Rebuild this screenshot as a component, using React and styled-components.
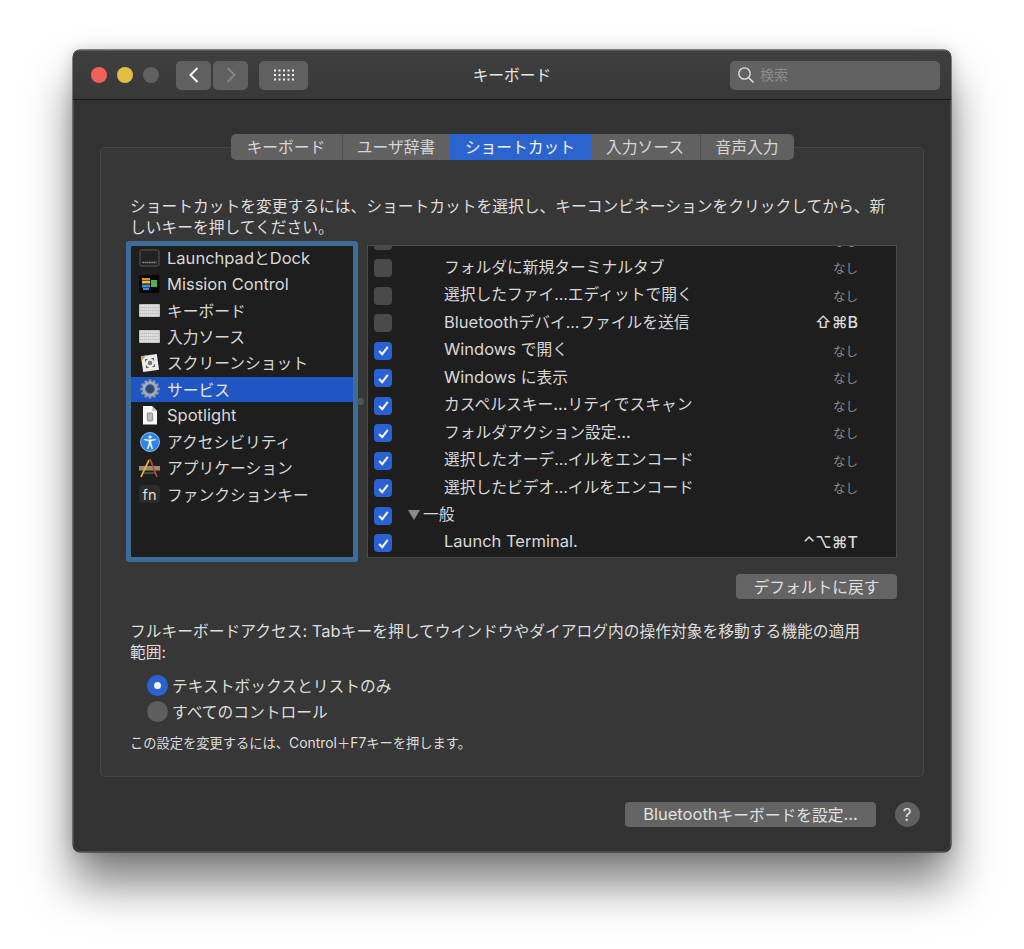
import React from "react";
import styled, { createGlobalStyle } from "styled-components";

const SANS = `Inter, "Noto Sans CJK JP", "DejaVu Sans", sans-serif`;

const TABS = ["キーボード", "ユーザ辞書", "ショートカット", "入力ソース", "音声入力"];
const TAB_WIDTHS = ["111px", "108px", "141px", "109px", "94px"];

const DockIcon = () => (
  <svg width="21" height="18" viewBox="0 0 21 18">
    <rect x="1" y="1" width="19" height="16" rx="1.5" fill="#222" stroke="#585858" />
    <line x1="3.5" x2="17.5" y1="13.5" y2="13.5" stroke="#8e8e8e" strokeWidth="1.6" strokeDasharray="1.6 .6" />
  </svg>
);

const MissionIcon = () => (
  <svg width="21" height="18" viewBox="0 0 21 18">
    <rect x="0.5" y="0" width="20" height="18" rx="1.5" fill="#050505" />
    <rect x="3" y="3" width="8" height="2.5" fill="#e8863a" />
    <rect x="3" y="6" width="8" height="2.5" fill="#e8c23a" />
    <rect x="3" y="9.5" width="8" height="3" fill="#3f8fdc" />
    <rect x="4" y="13" width="6" height="2" fill="#3f8fdc" />
    <rect x="12" y="5" width="6" height="7" fill="#4cb04c" />
  </svg>
);

const KeyboardIcon = () => (
  <svg width="21" height="13" viewBox="0 0 21 13">
    <rect x="0" y="0" width="21" height="13" rx="1" fill="#c4c4c4" />
    {[2, 5, 8, 11].map((y) => (
      <line key={y} x1="1.5" x2="19.5" y1={y} y2={y} stroke="#ececec" strokeWidth="1.6" strokeDasharray="1.6 .5" />
    ))}
  </svg>
);

const ScreenshotIcon = () => (
  <svg width="20" height="20" viewBox="0 0 20 20">
    <g transform="rotate(-8 10 10)">
      <rect x="2" y="2" width="16" height="16" fill="#ececec" />
      <path d="M2 2h5l-5 5z" fill="#d9a05a" />
      <path d="M6 8V6h2M12 6h2v2M14 12v2h-2M8 14H6v-2" fill="none" stroke="#555" strokeWidth="1.1" />
      <circle cx="10" cy="10" r="2.3" fill="#777" />
    </g>
  </svg>
);

const GearIcon = () => (
  <svg width="20" height="20" viewBox="0 0 20 20">
    {[0, 30, 60, 90, 120, 150, 180, 210, 240, 270, 300, 330].map((a) => (
      <rect key={a} x="8.7" y="0.3" width="2.6" height="4" fill="#8f97a3" transform={`rotate(${a} 10 10)`} />
    ))}
    <circle cx="10" cy="10" r="6.2" fill="none" stroke="#a3aab5" strokeWidth="3" />
    <circle cx="10" cy="10" r="3.6" fill="#3b4656" />
  </svg>
);

const SpotlightIcon = () => (
  <svg width="16" height="20" viewBox="0 0 16 20">
    <path d="M1 1h9l5 5v13.5H1z" fill="#fafafa" />
    <path d="M10 1v5h5z" fill="#c9c9c9" />
    <rect x="5.3" y="8" width="5.4" height="8" rx="1" fill="#bbb" stroke="#777" strokeWidth="0.8" />
  </svg>
);

const AccessIcon = () => (
  <svg width="20" height="20" viewBox="0 0 20 20">
    <circle cx="10" cy="10" r="9.5" fill="#2f86ea" stroke="#b8d6f5" strokeWidth="0.8" />
    <circle cx="10" cy="5" r="1.6" fill="#fff" />
    <path d="M4.8 7.6c3.4.9 7 .9 10.4 0" fill="none" stroke="#fff" strokeWidth="1.4" strokeLinecap="round" />
    <path d="M10 8.4v3.8" stroke="#fff" strokeWidth="2.6" />
    <path d="M9.4 12 7.8 16.4M10.6 12l1.6 4.4" fill="none" stroke="#fff" strokeWidth="1.4" strokeLinecap="round" />
  </svg>
);

const AppsIcon = () => (
  <svg width="21" height="20" viewBox="0 0 21 20">
    <rect x="0" y="8" width="21" height="4.5" fill="#a58a68" />
    <path d="M2 19 10 2" stroke="#e8c13a" strokeWidth="1.7" />
    <path d="M18 19 11 1" stroke="#b0503a" strokeWidth="1.7" />
    <path d="M5 15h11" stroke="#8a7355" strokeWidth="1" />
  </svg>
);

const FnIcon = () => <FnKey>fn</FnKey>;

const CATEGORIES = [
  { label: "LaunchpadとDock", Icon: DockIcon },
  { label: "Mission Control", Icon: MissionIcon },
  { label: "キーボード", Icon: KeyboardIcon },
  { label: "入力ソース", Icon: KeyboardIcon },
  { label: "スクリーンショット", Icon: ScreenshotIcon },
  { label: "サービス", Icon: GearIcon, selected: true },
  { label: "Spotlight", Icon: SpotlightIcon },
  { label: "アクセシビリティ", Icon: AccessIcon },
  { label: "アプリケーション", Icon: AppsIcon },
  { label: "ファンクションキー", Icon: FnIcon },
];

const SHORTCUTS = [
  { label: "", key: "なし" },
  { label: "フォルダに新規ターミナルタブ", key: "なし" },
  { label: "選択したファイ…エディットで開く", key: "なし" },
  { label: "Bluetoothデバイ…ファイルを送信", key: "⇧⌘B", bound: true },
  { label: "Windows で開く", key: "なし", on: true },
  { label: "Windows に表示", key: "なし", on: true },
  { label: "カスペルスキー...リティでスキャン", key: "なし", on: true },
  { label: "フォルダアクション設定...", key: "なし", on: true },
  { label: "選択したオーデ…イルをエンコード", key: "なし", on: true },
  { label: "選択したビデオ…イルをエンコード", key: "なし", on: true },
  { label: "一般", group: true, on: true },
  { label: "Launch Terminal.", key: "⌃⌥⌘T", bound: true, on: true },
];

// latin runs read a bit larger than the kana next to them
const Mixed = ({ text }) =>
  text.split(/([A-Za-z0-9 :.+]+)/).map((part, i) => (i % 2 ? <Latin key={i}>{part}</Latin> : part));

const App = () => {
  return (
    <>
      <GlobalStyle />
      <Page>
        <Window>
          <TitleBar>
            <TitleLeft>
              <Lights>
                <Light $color="#f1605a" />
                <Light $color="#e3bf41" />
                <Light $color="#616161" />
              </Lights>
              <NavGroup>
                <ToolButton $width="35px">
                  <svg width="14" height="18" viewBox="0 0 14 18">
                    <path d="M10.5 2 3.5 9l7 7" fill="none" stroke="#f2f2f2" strokeWidth="2" />
                  </svg>
                </ToolButton>
                <ToolButton $width="35px">
                  <svg width="14" height="18" viewBox="0 0 14 18">
                    <path d="M3.5 2l7 7-7 7" fill="none" stroke="#858585" strokeWidth="2" />
                  </svg>
                </ToolButton>
              </NavGroup>
              <ToolButton $width="49px">
                <svg width="20" height="14" viewBox="0 0 20 14">
                  {[2.5, 7, 11.5].flatMap((y) =>
                    [1, 5.5, 10, 14.5, 19].map((x) => (
                      <rect key={`${x}-${y}`} x={x - 1} y={y - 1} width="2" height="2" fill="#f0f0f0" />
                    ))
                  )}
                </svg>
              </ToolButton>
            </TitleLeft>
            <Title>キーボード</Title>
            <Search>
              <svg width="18" height="18" viewBox="0 0 18 18">
                <circle cx="7.5" cy="7.5" r="5.7" fill="none" stroke="#e4e4e4" strokeWidth="1.3" />
                <path d="M11.7 11.7 16.5 16.5" stroke="#e4e4e4" strokeWidth="1.5" />
              </svg>
              <SearchHint>検索</SearchHint>
            </Search>
          </TitleBar>

          <Body>
            <Tabs>
              {TABS.map((tab, i) => (
                <Tab key={tab} $active={i === 2} $index={i}>
                  {tab}
                </Tab>
              ))}
            </Tabs>
            <Panel>
              <Description>
                ショートカットを変更するには、ショートカットを選択し、キーコンビネーションをクリックしてから、新
                <br />
                しいキーを押してください。
              </Description>

              <Lists>
                <CategoryList>
                  {CATEGORIES.map(({ label, Icon, selected }) => (
                    <CategoryRow key={label} $selected={selected}>
                      <CategoryIcon>
                        <Icon />
                      </CategoryIcon>
                      <Mixed text={label} />
                    </CategoryRow>
                  ))}
                </CategoryList>
                <SplitHandle />
                <ShortcutTable>
                  <ShortcutScroll>
                    {SHORTCUTS.map((s, i) => (
                      <ShortcutRow key={i}>
                        <Check $on={s.on}>
                          {s.on && (
                            <svg width="13" height="13" viewBox="0 0 13 13">
                              <path d="M2.2 7 5.2 10.2 10.8 2.8" fill="none" stroke="#fff" strokeWidth="2" />
                            </svg>
                          )}
                        </Check>
                        {s.group ? (
                          <GroupLabel>
                            <Disclosure />
                            <GroupText>{s.label}</GroupText>
                          </GroupLabel>
                        ) : (
                          <ShortcutLabel>
                            <Mixed text={s.label} />
                          </ShortcutLabel>
                        )}
                        {s.key && <ShortcutKey $bound={s.bound}>{s.key}</ShortcutKey>}
                      </ShortcutRow>
                    ))}
                  </ShortcutScroll>
                </ShortcutTable>
              </Lists>

              <DefaultRow>
                <PushButton $width="161px">デフォルトに戻す</PushButton>
              </DefaultRow>

              <AccessText>
                <Mixed text="フルキーボードアクセス: Tabキーを押してウインドウやダイアログ内の操作対象を移動する機能の適用" />
                <br />
                範囲:
              </AccessText>
              <RadioGroup>
                <RadioRow>
                  <Radio $on />
                  テキストボックスとリストのみ
                </RadioRow>
                <RadioRow>
                  <Radio />
                  すべてのコントロール
                </RadioRow>
              </RadioGroup>
              <Note>
                <Mixed text="この設定を変更するには、Control＋F7キーを押します。" />
              </Note>
            </Panel>

            <Footer>
              <PushButton $width="251px">
                <Mixed text="Bluetoothキーボードを設定..." />
              </PushButton>
              <HelpButton>?</HelpButton>
            </Footer>
          </Body>
        </Window>
      </Page>
    </>
  );
};

export default App;

const GlobalStyle = createGlobalStyle`
  html, body {
    margin: 0;
    background: #fff;
  }
  body {
    font-family: ${SANS};
    color: #dedede;
  }
`;

const Latin = styled.span`
  font-size: 1.05em;
`;

const Page = styled.div`
  box-sizing: border-box;
  width: 1024px;
  height: 949px;
  padding: 50px 73px 0;
  overflow: hidden;
`;

const Window = styled.div`
  box-sizing: border-box;
  width: 878px;
  height: 802px;
  border-radius: 7px;
  background: #323232;
  box-shadow: 0 0 0 0.5px #222, inset 0 0 0 1px #4c4c4c, 0 32px 46px rgba(0, 0, 0, 0.5), 0 0 16px rgba(0, 0, 0, 0.18);
`;

const TitleBar = styled.header`
  box-sizing: border-box;
  height: 50px;
  display: grid;
  grid-template-columns: 1fr auto 1fr;
  align-items: center;
  padding: 0 11px 0 18px;
  border-radius: 7px 7px 0 0;
  border-top: 1px solid #5a5a5a;
  border-bottom: 1px solid #191919;
  background: linear-gradient(#3f3f3f, #383838);
`;

const TitleLeft = styled.div`
  display: flex;
  align-items: center;
`;

const Lights = styled.div`
  display: flex;
  gap: 10px;
  margin-right: 17px;
`;

const Light = styled.span`
  width: 16px;
  height: 16px;
  border-radius: 50%;
  background: ${(props) => props.$color};
`;

const NavGroup = styled.div`
  display: flex;
  gap: 2px;
  margin-right: 11px;
`;

const ToolButton = styled.div`
  width: ${(props) => props.$width};
  height: 29px;
  display: flex;
  align-items: center;
  justify-content: center;
  border-radius: 5px;
  background: #606060;
`;

const Title = styled.div`
  margin: 0 7px 2px 0;
  font-size: 15.75px;
  color: #e6e6e6;
`;

const Search = styled.div`
  justify-self: end;
  box-sizing: border-box;
  width: 210px;
  height: 29px;
  display: flex;
  align-items: center;
  gap: 5px;
  padding-left: 7px;
  border-radius: 5px;
  background: #626262;
`;

const SearchHint = styled.span`
  margin-bottom: 2px;
  font-size: 14px;
  color: #8b8b8b;
`;

const Body = styled.div`
  padding: 34px 27px 0;
`;

const Tabs = styled.div`
  position: relative;
  z-index: 1;
  width: 563px;
  height: 26px;
  margin: 0 auto -13px;
  display: flex;
  border-radius: 5px;
  overflow: hidden;
`;

const Tab = styled.div`
  box-sizing: border-box;
  width: ${(props) => TAB_WIDTHS[props.$index]};
  display: flex;
  align-items: center;
  justify-content: center;
  padding-bottom: 1px;
  font-size: 15.75px;
  color: ${(props) => (props.$active ? "#f4f4f4" : "#d6d6d6")};
  background: ${(props) => (props.$active ? "#2b64cf" : "#616161")};
  border-left: ${(props) => (props.$index === 1 || props.$index === 4 ? "1px solid #505050" : "none")};
`;

const Panel = styled.section`
  box-sizing: border-box;
  height: 630px;
  padding: 48px 26px 0 30px;
  border: 1px solid #464646;
  border-radius: 5px;
  background: #373737;
`;

const Description = styled.p`
  margin: 0 0 0 -1px;
  font-size: 15.75px;
  line-height: 21px;
  white-space: nowrap;
`;

const Lists = styled.div`
  position: relative;
  display: flex;
  height: 313px;
  margin-top: 7px;
`;

const CategoryList = styled.div`
  box-sizing: border-box;
  width: 222px;
  height: 311px;
  margin: 1px 14px 0 0;
  background: #1e1e1e;
  box-shadow: 0 0 0 5px #3f6c97;
  border-radius: 1px;
`;

const CategoryRow = styled.div`
  box-sizing: border-box;
  height: 24.5px;
  margin-bottom: 1.75px;
  display: flex;
  align-items: center;
  padding: 0 0 1px 8px;
  font-size: 15.75px;
  white-space: pre;
  color: ${(props) => (props.$selected ? "#e8e8e8" : "#d8d8d8")};
  background: ${(props) => (props.$selected ? "#1f56c3" : "transparent")};
`;

const CategoryIcon = styled.span`
  width: 21px;
  height: 20px;
  margin-right: 7px;
  display: flex;
  align-items: center;
  justify-content: center;
`;

const FnKey = styled.span`
  width: 21px;
  height: 18px;
  display: flex;
  align-items: center;
  justify-content: center;
  border-radius: 4px;
  background: #2c2c2c;
  font-size: 14.5px;
  color: #dcdcdc;
`;

const SplitHandle = styled.span`
  position: absolute;
  left: 226px;
  top: 153px;
  width: 7px;
  height: 7px;
  border-radius: 50%;
  background: #555;
`;

const ShortcutTable = styled.div`
  box-sizing: border-box;
  width: 530px;
  overflow: hidden;
  border: 1px solid #4b4b4b;
  background: #1e1e1e;
`;

const ShortcutScroll = styled.div`
  margin-top: -19.25px;
`;

const ShortcutRow = styled.div`
  height: 27.5px;
  display: flex;
  align-items: center;
  padding: 0 38px 0 6px;
`;

const Check = styled.span`
  box-sizing: border-box;
  flex: none;
  width: 18px;
  height: 18px;
  display: flex;
  align-items: center;
  justify-content: center;
  border-radius: 4px;
  background: ${(props) => (props.$on ? "#2a62d4" : "#4a4a4a")};
`;

const ShortcutLabel = styled.span`
  margin: 0 0 4px 52px;
  font-size: 15.75px;
  white-space: pre;
  color: #d8d8d8;
`;

const GroupLabel = styled.span`
  display: flex;
  align-items: center;
  margin-left: 16px;
`;

const GroupText = styled.span`
  margin-bottom: 4px;
  font-size: 15.75px;
  color: #d8d8d8;
`;

const Disclosure = styled.i`
  width: 0;
  height: 0;
  margin: 0 3px 2px 0;
  border-left: 6px solid transparent;
  border-right: 6px solid transparent;
  border-top: 10px solid #8a8a8a;
`;

const ShortcutKey = styled.span`
  margin: 0 0 ${(props) => (props.$bound ? "2px" : "1px")} auto;
  font-size: ${(props) => (props.$bound ? "16px" : "12.5px")};
  font-weight: ${(props) => (props.$bound ? 500 : 400)};
  color: ${(props) => (props.$bound ? "#dcdcdc" : "#8a8a8a")};
`;

const DefaultRow = styled.div`
  display: flex;
  justify-content: flex-end;
  margin-top: 16px;
`;

const PushButton = styled.div`
  width: ${(props) => props.$width};
  height: 25px;
  display: flex;
  align-items: center;
  justify-content: center;
  padding-bottom: 1px;
  box-sizing: border-box;
  border-radius: 4px;
  background: #646464;
  font-size: 15.75px;
  white-space: pre;
  color: #e0e0e0;
`;

const AccessText = styled.p`
  margin: 22px 0 0 -1px;
  font-size: 15.75px;
  line-height: 21px;
  white-space: pre;
`;

const RadioGroup = styled.div`
  margin: 9px 0 0 16px;
`;

const RadioRow = styled.div`
  height: 26px;
  display: flex;
  align-items: center;
  gap: 4px;
  font-size: 15.75px;
`;

const Radio = styled.span`
  width: 21px;
  height: 21px;
  display: flex;
  align-items: center;
  justify-content: center;
  border-radius: 50%;
  background: ${(props) => (props.$on ? "#2a62d4" : "#5e5e5e")};
  &::after {
    content: "";
    display: ${(props) => (props.$on ? "block" : "none")};
    width: 7px;
    height: 7px;
    border-radius: 50%;
    background: #f2f2f2;
  }
`;

const Note = styled.p`
  margin: 9px 0 0 -1px;
  font-size: 13.25px;
  line-height: 20px;
  white-space: pre;
`;

const Footer = styled.footer`
  display: flex;
  justify-content: flex-end;
  align-items: center;
  gap: 18.5px;
  margin-top: 25px;
`;

const HelpButton = styled.div`
  width: 25px;
  height: 25px;
  margin-right: 4.5px;
  display: flex;
  align-items: center;
  justify-content: center;
  border-radius: 50%;
  background: #606060;
  font-size: 17px;
  color: #e8e8e8;
`;
